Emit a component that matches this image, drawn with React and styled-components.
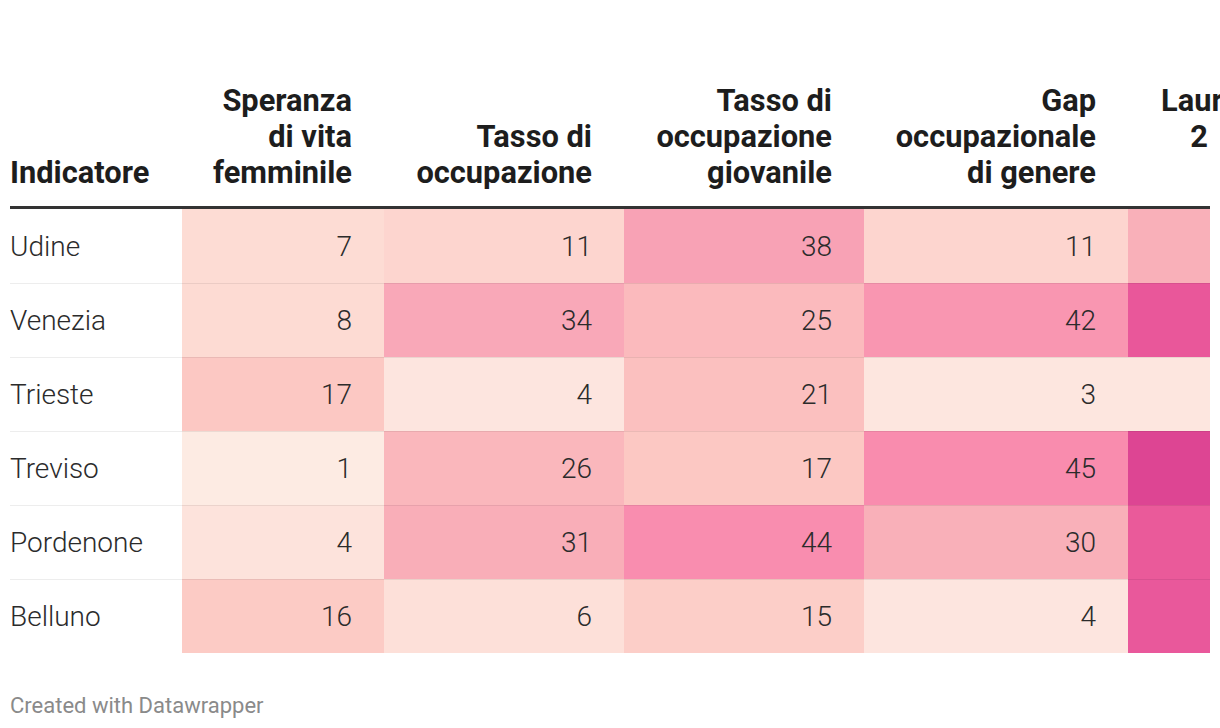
import React from 'react';
import styled, { createGlobalStyle } from 'styled-components';

const GlobalStyle = createGlobalStyle`
    body {
        margin: 0;
        background: #fff;
        font-family: Roboto, 'Liberation Sans', sans-serif;
        overflow: hidden;
    }
`;

const ChartBlock = styled.div`
    width: 1200px;
    padding: 75px 10px 0;
    overflow: hidden;
`;

const Table = styled.table`
    width: 1200px;
    table-layout: fixed;
    border-collapse: separate;
    border-spacing: 0;
    color: #2b2b2b;
`;

const Th = styled.th`
    box-sizing: border-box;
    width: ${(p) => p.$w}px;
    padding: 8px ${(p) => (p.$first ? 0 : p.$edge ? 2 : 32)}px 15px
        ${(p) => (p.$edge ? 33 : 0)}px;
    text-align: ${(p) => (p.$first ? 'left' : 'right')};
    vertical-align: ${(p) => (p.$edge ? 'top' : 'bottom')};
    font-size: 30.8px;
    font-weight: 700;
    line-height: 36px;
    color: #1d1d1d;
    border-bottom: 3px solid #333;
    white-space: nowrap;
    overflow: visible;
`;

const Row = styled.tr`
    & + & td {
        border-top: 1px solid rgba(0, 0, 0, 0.07);
    }
`;

const Td = styled.td`
    box-sizing: border-box;
    height: 74px;
    padding: 0 ${(p) => (p.$first ? 0 : 32)}px 0 0;
    text-align: ${(p) => (p.$first ? 'left' : 'right')};
    vertical-align: middle;
    font-size: 28px;
    font-weight: 300;
    background: ${(p) => p.$bg || 'transparent'};
    white-space: nowrap;
`;

const Footer = styled.div`
    margin-top: 41px;
    font-size: 22px;
    line-height: 24px;
    color: #8a8a8a;
`;

// l'ultima colonna esce dal riquadro visibile
const columns = [
    { w: 172, label: ['Indicatore'] },
    { w: 202, label: ['Speranza', 'di vita', 'femminile'] },
    { w: 240, label: ['Tasso di', 'occupazione'] },
    { w: 240, label: ['Tasso di', 'occupazione', 'giovanile'] },
    { w: 264, label: ['Gap', 'occupazionale', 'di genere'] },
    { w: 82, label: ['Laureate', '2'], edge: true },
];

// valore + colore della scala per ogni cella (ultima colonna senza valore visibile)
const rows = [
    ['Udine', [7, '#fddcd4'], [11, '#fdd5cf'], [38, '#f8a2b5'], [11, '#fdd5cf'], [null, '#f9b0b9']],
    ['Venezia', [8, '#fddbd3'], [34, '#f9a8b8'], [25, '#fbbabd'], [42, '#f996b1'], [null, '#e9579a']],
    ['Trieste', [17, '#fcc8c3'], [4, '#fde5df'], [21, '#fbc0bf'], [3, '#fde6df'], [null, '#fde6df']],
    ['Treviso', [1, '#fdebe3'], [26, '#fab7bc'], [17, '#fcc8c3'], [45, '#f98cae'], [null, '#dd4593']],
    ['Pordenone', [4, '#fde3dc'], [31, '#f9aeb8'], [44, '#f98daf'], [30, '#f9b0b9'], [null, '#ea5a9a']],
    ['Belluno', [16, '#fccbc5'], [6, '#fde0d9'], [15, '#fccec8'], [4, '#fde5df'], [null, '#e9589b']],
];

const App = () => {
    return (
        <>
            <GlobalStyle />
            <ChartBlock>
                <Table>
                    <thead>
                        <tr>
                            {columns.map((c, i) => (
                                <Th key={i} $w={c.w} $first={i === 0} $edge={c.edge}>
                                    {c.label.map((l, j) => (
                                        <React.Fragment key={j}>
                                            {j > 0 && <br />}
                                            {l}
                                        </React.Fragment>
                                    ))}
                                </Th>
                            ))}
                        </tr>
                    </thead>
                    <tbody>
                        {rows.map((r) => (
                            <Row key={r[0]}>
                                <Td $first>{r[0]}</Td>
                                {r.slice(1).map(([v, bg], i) => (
                                    <Td key={i} $bg={bg}>
                                        {v}
                                    </Td>
                                ))}
                            </Row>
                        ))}
                    </tbody>
                </Table>
                <Footer>Created with Datawrapper</Footer>
            </ChartBlock>
        </>
    );
};

export default App;
